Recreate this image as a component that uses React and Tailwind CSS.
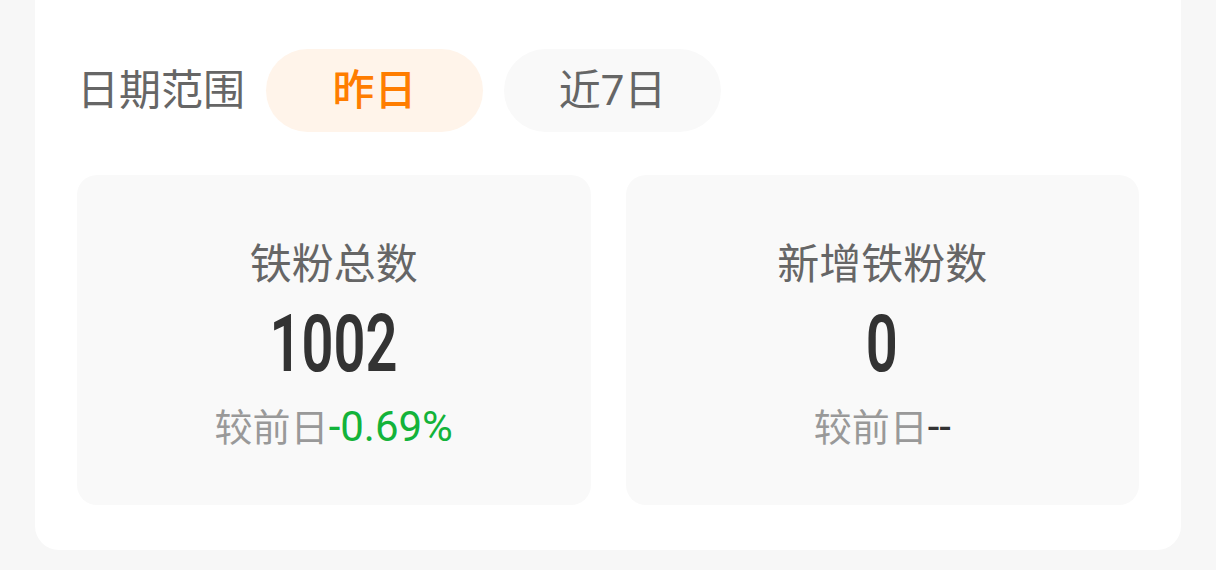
import React, { useState } from 'react'

// 铁粉数据卡片：日期切换 + 两个统计块
const RANGES = ['昨日', '近7日']

const STATS = [
  { title: '铁粉总数', value: '1002', diff: '-0.69%', diffColor: 'text-[#13b33a]' },
  { title: '新增铁粉数', value: '0', diff: '--', diffColor: 'text-[#333333]' },
]

const FONT = "font-['Roboto','Noto_Sans_CJK_SC',sans-serif]"

function StatBlock({ stat }) {
  return (
    <div className="flex-1 h-[330px] pt-[12px] rounded-[20px] bg-[#f9f9f9] flex flex-col items-center justify-center">
      <div className="text-[42px] leading-[48px] text-[#666666]">{stat.title}</div>
      <div className="mt-[11px] h-[88px] flex items-center justify-center">
        <span className="inline-block text-[80px] leading-[88px] font-semibold text-[#333333] scale-x-[0.7]">
          {stat.value}
        </span>
      </div>
      <div className="mt-[15px] text-[38px] leading-[48px] text-[#999999]">
        较前日<span className={`text-[42px] ${stat.diffColor}`}>{stat.diff}</span>
      </div>
    </div>
  )
}

export default function App() {
  const [range, setRange] = useState('昨日')

  return (
    <div className={`min-h-[570px] bg-[#f7f7f7] px-[35px] pb-[20px] ${FONT}`}>
      <div className="bg-white rounded-b-[24px] px-[42px] pt-[49px] pb-[45px]">
        {/* 日期范围切换 */}
        <div className="flex items-center gap-[21px]">
          <span className="text-[42px] leading-[48px] text-[#666666]">日期范围</span>
          {RANGES.map(r => {
            const active = r === range
            return (
              <button
                key={r}
                onClick={() => setRange(r)}
                className={
                  active
                    ? 'w-[217px] h-[83px] rounded-full bg-[#fff4ea] text-[#ff7d00] text-[42px] font-medium'
                    : 'w-[217px] h-[83px] rounded-full bg-[#f9f9f9] text-[#666666] text-[42px]'
                }
              >
                {r}
              </button>
            )
          })}
        </div>

        {/* 统计块 */}
        <div className="mt-[43px] flex gap-[35px]">
          {STATS.map(s => (
            <StatBlock key={s.title} stat={s} />
          ))}
        </div>
      </div>
    </div>
  )
}
